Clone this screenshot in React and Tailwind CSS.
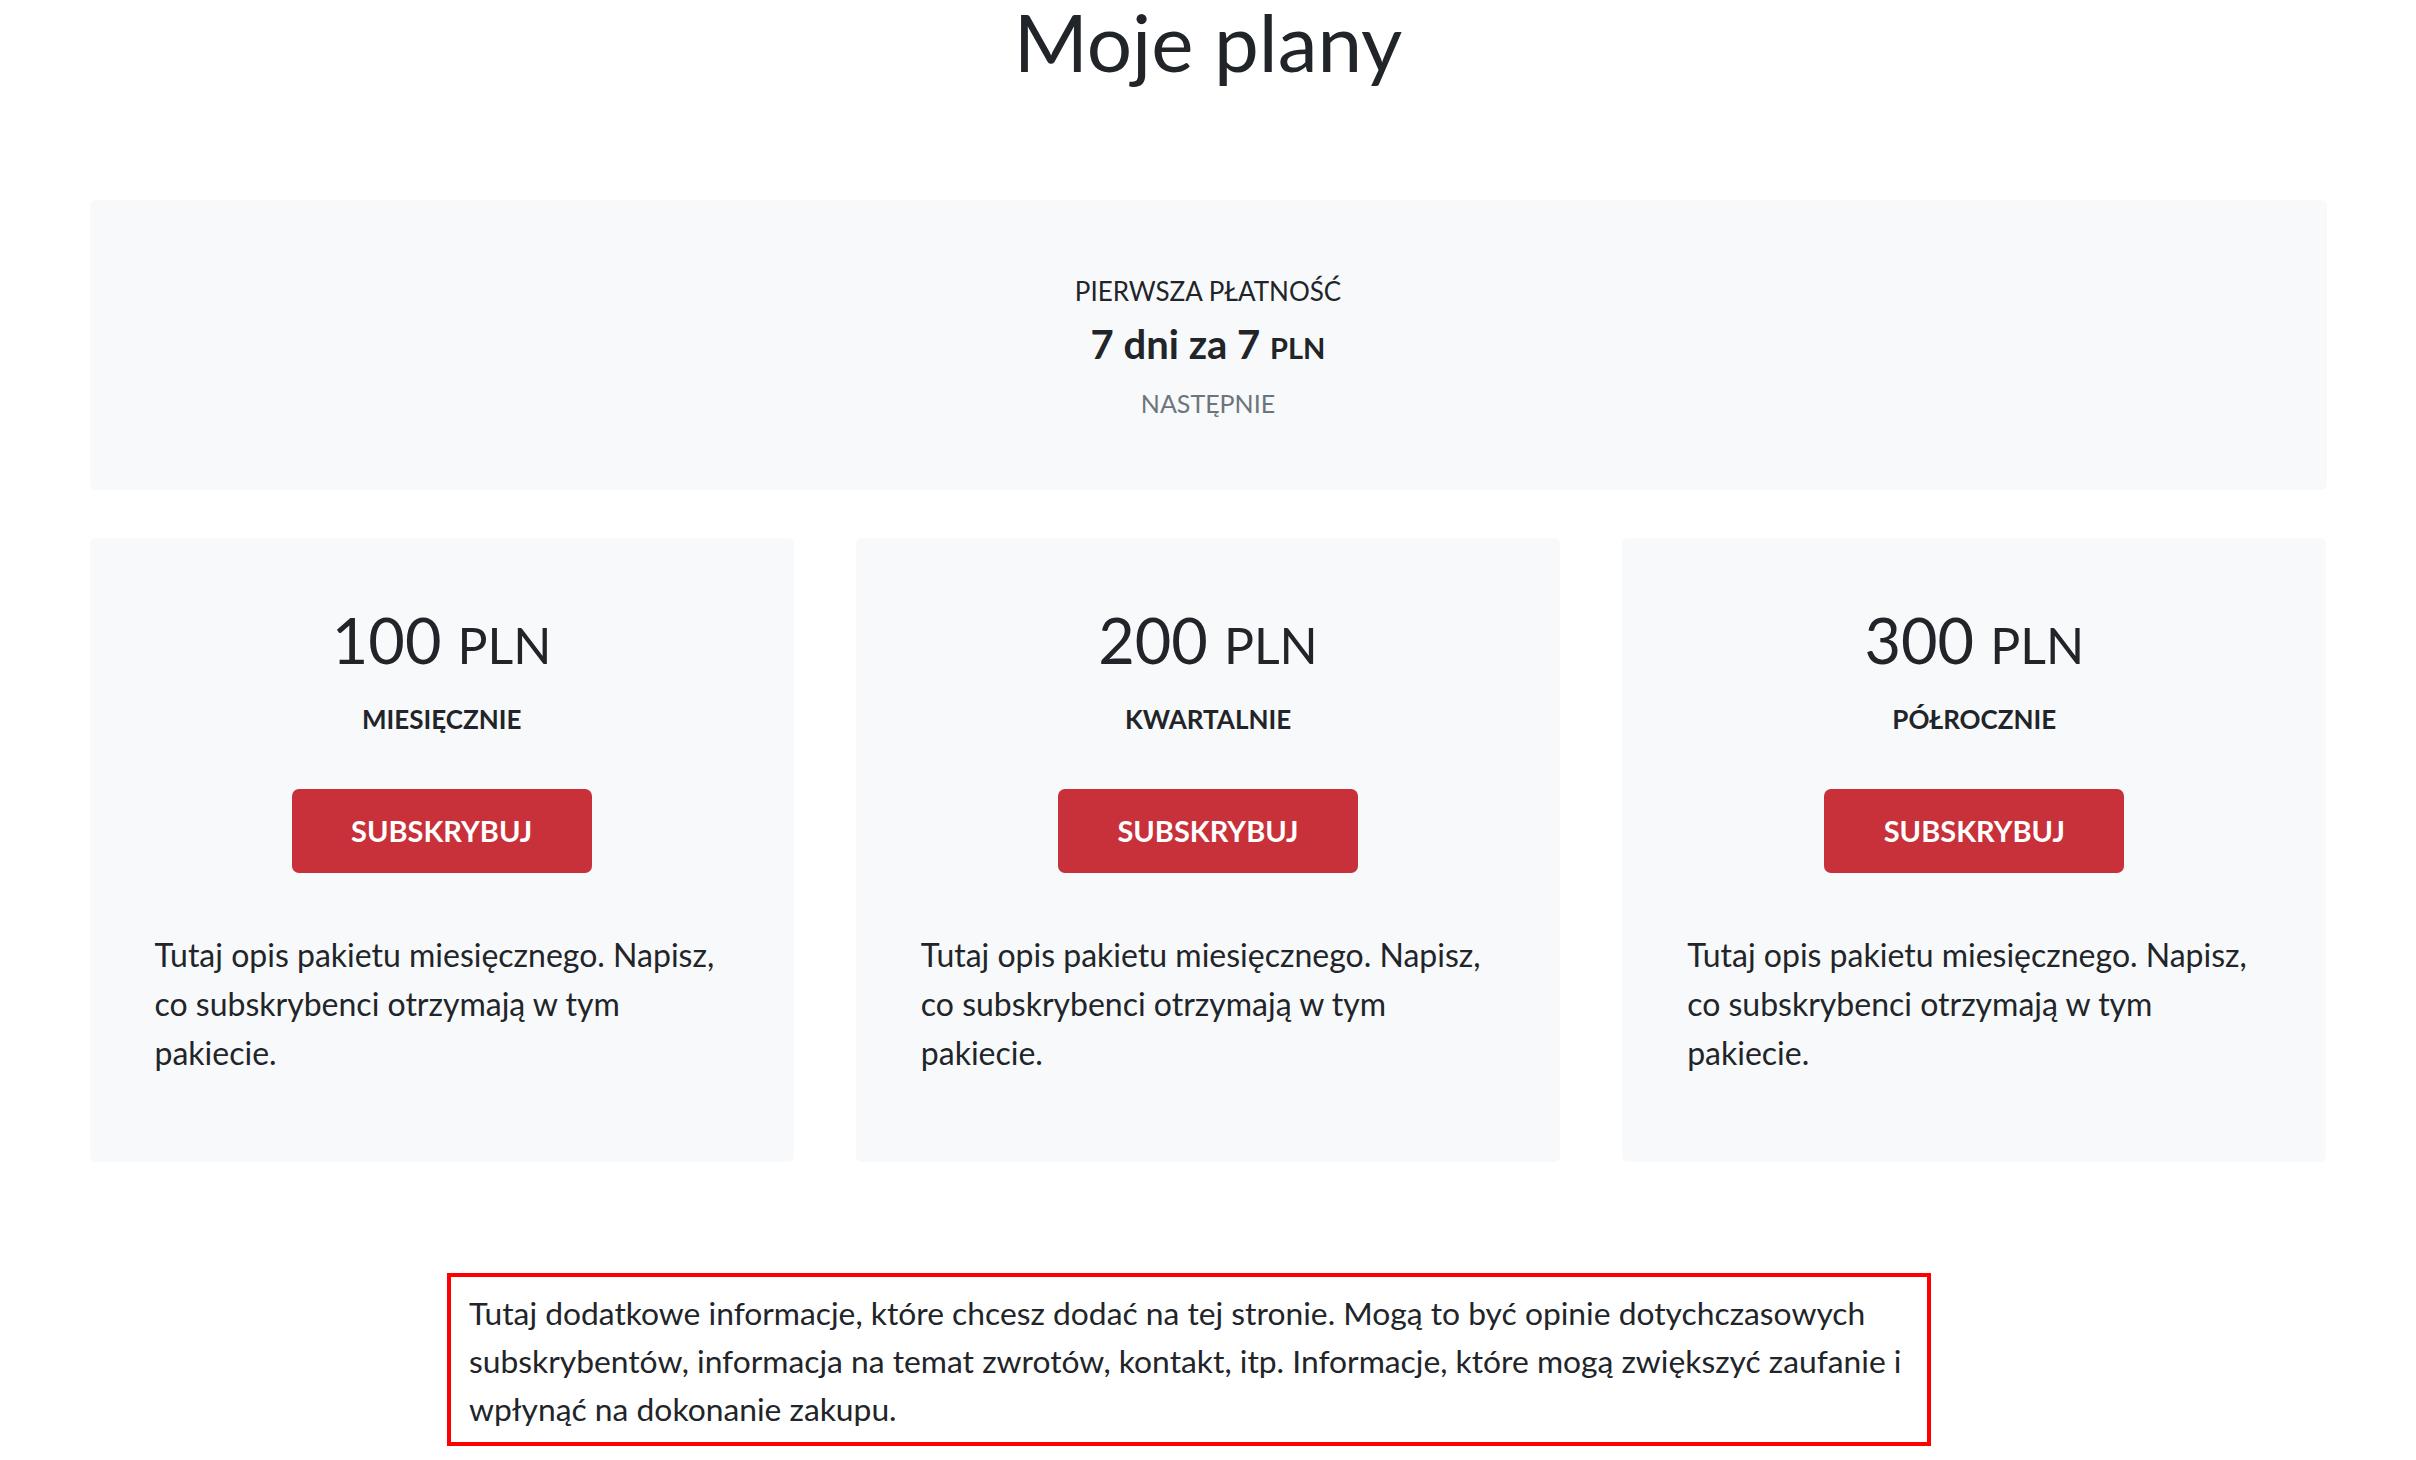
import React from 'react';

const plans = [
  { price: '100', period: 'MIESIĘCZNIE' },
  { price: '200', period: 'KWARTALNIE' },
  { price: '300', period: 'PÓŁROCZNIE' },
];

function PlanCard({ price, period }) {
  return (
    <div className="bg-[#f8f9fa] rounded-[6px] pt-[64px] pb-[85px] px-[65px] flex flex-col items-center">
      <div className="text-[63px] leading-[1.2] text-[#212529]">
        {price} <span className="text-[50px]">PLN</span>
      </div>
      <div className="mt-[23px] text-[26px] leading-[1.5] font-bold text-[#212529]">{period}</div>
      <button className="mt-[50px] w-[300px] h-[84px] rounded-[7px] bg-[#c8313a] text-white text-[29px] font-bold">
        SUBSKRYBUJ
      </button>
      <p className="mt-[57px] self-stretch text-[32px] leading-[49px] text-[#212529]">
        Tutaj opis pakietu miesięcznego. Napisz, co subskrybenci otrzymają w tym pakiecie.
      </p>
    </div>
  );
}

export default function App() {
  return (
    <div className="min-h-screen bg-white font-['Lato','Liberation_Sans',sans-serif] overflow-hidden">
      <h1 className="pt-[1px] text-center text-[80px] leading-none text-[#212529]">Moje plany</h1>

      <div className="mx-auto w-[2237px] mt-[119px]">
        {/* pierwsza płatność */}
        <div className="bg-[#f8f9fa] rounded-[6px] pt-[72px] pb-[67px] flex flex-col items-center text-[#212529]">
          <div className="text-[26px] leading-[1.5]">PIERWSZA PŁATNOŚĆ</div>
          <div className="mt-[9px] text-[40px] leading-[1.2] font-bold">
            7 dni za 7 <span className="text-[29px]">PLN</span>
          </div>
          <div className="mt-[17px] text-[25px] leading-[1.5] text-[#6c757d]">NASTĘPNIE</div>
        </div>

        <div className="grid grid-cols-3 gap-[62px] mt-[48px]">
          {plans.map((p) => (
            <PlanCard key={p.price} {...p} />
          ))}
        </div>
      </div>

      <div className="ml-[447px] w-[1484px] mt-[111px] border-[4px] border-[#ff0000] pl-[18px] pr-[4px] pt-[12px] pb-[9px] text-[31.8px] leading-[48px] text-[#212529] whitespace-nowrap">
        Tutaj dodatkowe informacje, które chcesz dodać na tej stronie. Mogą to być opinie dotychczasowych
        <br />
        subskrybentów, informacja na temat zwrotów, kontakt, itp. Informacje, które mogą zwiększyć zaufanie i
        <br />
        wpłynąć na dokonanie zakupu.
      </div>
    </div>
  );
}
